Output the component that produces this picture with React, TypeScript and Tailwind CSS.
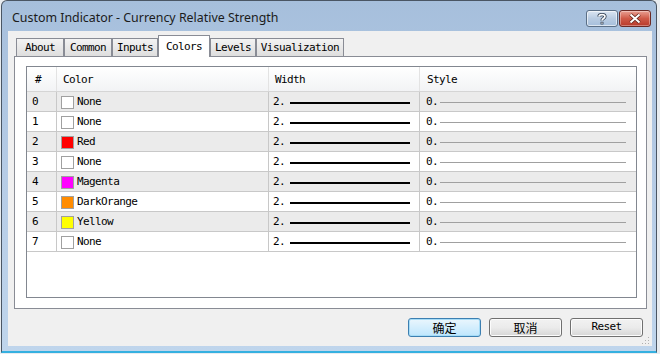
const mono = "font-['DejaVu_Sans_Mono',monospace] text-[11px] tracking-[-0.6px] text-black"

type Row = { n: number; color: string | null; name: string }

const rows: Row[] = [
  { n: 0, color: null, name: 'None' },
  { n: 1, color: null, name: 'None' },
  { n: 2, color: '#ff0000', name: 'Red' },
  { n: 3, color: null, name: 'None' },
  { n: 4, color: '#ff00ff', name: 'Magenta' },
  { n: 5, color: '#ff8c00', name: 'DarkOrange' },
  { n: 6, color: '#ffff00', name: 'Yellow' },
  { n: 7, color: null, name: 'None' },
]

const tabs = [
  { label: 'About', w: 'w-[48px]' },
  { label: 'Common', w: 'w-[48px]' },
  { label: 'Inputs', w: 'w-[46px]' },
  { label: 'Colors', w: 'w-[52px]', active: true },
  { label: 'Levels', w: 'w-[46px]' },
  { label: 'Visualization', w: 'w-[88px]' },
]

function CaptionButtons() {
  return (
    <div className="mt-[9px] mr-[5px] flex gap-[1px]">
      <div className="flex h-[17px] w-[32px] items-center justify-center rounded-[3px] border border-[#5b6f86] bg-gradient-to-b from-[#dbe6f2] via-[#b9cce2] to-[#a6bfdc] shadow-[inset_0_0_0_1px_rgba(255,255,255,0.6)]">
        <svg width="10" height="12" viewBox="0 0 10 12">
          <path d="M2 3.5 C2 1 8 1 8 3.5 C8 5.5 5 5.5 5 7.5" fill="none" stroke="#2b3a4d" strokeWidth="3.2" />
          <path d="M2 3.5 C2 1 8 1 8 3.5 C8 5.5 5 5.5 5 7.5" fill="none" stroke="#ffffff" strokeWidth="1.6" />
          <rect x="3.6" y="8.8" width="2.8" height="2.6" fill="#2b3a4d" />
          <rect x="4.3" y="9.5" width="1.4" height="1.2" fill="#ffffff" />
        </svg>
      </div>
      <div className="flex h-[17px] w-[32px] items-center justify-center rounded-[3px] border border-[#6b2a25] bg-gradient-to-b from-[#e8a093] via-[#cf5a48] to-[#b8392a] shadow-[inset_0_0_0_1px_rgba(255,255,255,0.35)]">
        <svg width="14" height="11" viewBox="0 0 14 11">
          <path d="M2.5 1.5 L11.5 9.5 M11.5 1.5 L2.5 9.5" stroke="#5a2018" strokeWidth="3.6" />
          <path d="M2.5 1.5 L11.5 9.5 M11.5 1.5 L2.5 9.5" stroke="#ffffff" strokeWidth="2" />
        </svg>
      </div>
    </div>
  )
}

function Swatch({ color }: { color: string | null }) {
  return (
    <span
      className="box-border inline-block h-[13px] w-[13px] border border-[#a0a0a0]"
      style={{ backgroundColor: color ?? '#ffffff' }}
    />
  )
}

function WinButton({ label, primary, cjk }: { label: string; primary?: boolean; cjk?: boolean }) {
  return (
    <div
      className={`flex h-[19px] w-[73px] items-center justify-center rounded-[3px] border ${
        primary
          ? 'border-[#3c7fb1] bg-gradient-to-b from-[#eaf6fd] to-[#bee6fd] shadow-[inset_0_0_0_1px_#a6dcf7]'
          : 'border-[#707070] bg-gradient-to-b from-[#f2f2f2] via-[#ebebeb] to-[#d6d6d6] shadow-[inset_0_0_0_1px_#fcfcfc]'
      }`}
    >
      {cjk ? (
        <span className="font-['Noto_Sans_CJK_SC',sans-serif] text-[12px] leading-none text-black">{label}</span>
      ) : (
        <span className={mono}>{label}</span>
      )}
    </div>
  )
}

export default function App() {
  return (
    <div className="flex h-[354px] w-[660px] bg-[#e8ecf0] pl-[1px]">
      <div className="flex h-[353px] w-[656px] flex-col rounded-t-[6px] border border-b-2 border-[#4a5664] border-b-[#35b0e0] bg-gradient-to-b from-[#a6bfdc] via-[#b6cce6] to-[#bfd5ec]">
        {/* title bar */}
        <div className="flex h-[30px] items-start justify-between">
          <span className="pt-[11px] pl-[10px] font-['Noto_Sans',sans-serif] text-[12.4px] leading-none text-[#1b1b1b]">
            Custom Indicator - Currency Relative Strength
          </span>
          <CaptionButtons />
        </div>

        {/* client */}
        <div className="ml-[6px] mr-[4px] flex h-[315px] flex-col bg-[#f0f0f0]">
          <div className="mt-[4px] ml-[8px] flex h-[21px] items-end">
            {tabs.map((t) =>
              t.active ? (
                <div
                  key={t.label}
                  className={`relative z-10 -mb-px flex h-[22px] ${t.w} items-start justify-center border border-b-0 border-[#898c95] bg-white pt-[3px]`}
                >
                  <span className={mono}>{t.label}</span>
                </div>
              ) : (
                <div
                  key={t.label}
                  className={`flex h-[18px] ${t.w} items-center justify-center border border-b-0 border-[#898c95] bg-gradient-to-b from-[#f3f3f3] to-[#dedede] pt-[1px]`}
                >
                  <span className={mono}>{t.label}</span>
                </div>
              )
            )}
          </div>

          <div className="ml-[6px] h-[253px] w-[633px] border border-[#898c95] bg-white">
            <div className="mt-[9px] ml-[11px] h-[232px] w-[611px] border border-[#828790] bg-white">
              {/* header */}
              <div className="flex h-[25px] border-b border-[#d5d5d5] bg-gradient-to-b from-white to-[#f2f3f5]">
                <div className="flex w-[30px] items-center border-r border-[#e3e3e3] pt-[3px] pl-[8px]">
                  <span className={mono}>#</span>
                </div>
                <div className="flex w-[212px] items-center border-r border-[#e3e3e3] pt-[3px] pl-[6px]">
                  <span className={mono}>Color</span>
                </div>
                <div className="flex w-[151px] items-center border-r border-[#e3e3e3] pt-[3px] pl-[6px]">
                  <span className={mono}>Width</span>
                </div>
                <div className="flex flex-1 items-center pt-[3px] pl-[7px]">
                  <span className={mono}>Style</span>
                </div>
              </div>

              {rows.map((r, i) => (
                <div
                  key={r.n}
                  className={`flex h-[20px] border-b border-[#c8c8c8] ${i % 2 === 0 ? 'bg-[#ebebeb]' : 'bg-white'}`}
                >
                  <div className="flex w-[30px] items-center border-r border-[#c8c8c8] pt-[2px] pl-[5px]">
                    <span className={mono}>{r.n}</span>
                  </div>
                  <div className="flex w-[212px] items-center gap-[3px] border-r border-[#c8c8c8] pt-[2px] pl-[4px]">
                    <Swatch color={r.color} />
                    <span className={mono}>{r.name}</span>
                  </div>
                  <div className="flex w-[151px] items-center border-r border-[#c8c8c8] pt-[2px] pl-[4px]">
                    <span className={`${mono} w-[17px]`}>2.</span>
                    <span className="h-[2px] w-[120px] bg-black" />
                  </div>
                  <div className="flex flex-1 items-center pt-[2px] pl-[6px]">
                    <span className={`${mono} w-[14px]`}>0.</span>
                    <span className="h-px w-[186px] bg-[#a0a0a0]" />
                  </div>
                </div>
              ))}
            </div>
          </div>

          <div className="mt-[9px] flex justify-end gap-[8px] pr-[9px]">
            <WinButton label="确定" primary cjk />
            <WinButton label="取消" cjk />
            <WinButton label="Reset" />
          </div>
          <div className="flex flex-1 items-end justify-end pr-[2px] pb-[1px]">
            <svg width="8" height="8" viewBox="0 0 8 8">
              <g fill="#b0b0b0">
                <rect x="6" y="0" width="1" height="1" />
                <rect x="3" y="3" width="1" height="1" />
                <rect x="6" y="3" width="1" height="1" />
                <rect x="0" y="6" width="1" height="1" />
                <rect x="3" y="6" width="1" height="1" />
                <rect x="6" y="6" width="1" height="1" />
              </g>
            </svg>
          </div>
        </div>
      </div>
    </div>
  )
}
